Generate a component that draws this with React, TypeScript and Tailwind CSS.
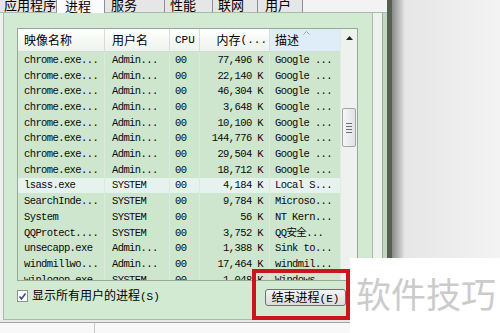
import React from "react";

type Row = { name: string; user: string; mem: string; desc: string; sel?: boolean };

const rows: Row[] = [
  { name: "chrome.exe...", user: "Admin...", mem: "77,496", desc: "Google ..." },
  { name: "chrome.exe...", user: "Admin...", mem: "22,140", desc: "Google ..." },
  { name: "chrome.exe...", user: "Admin...", mem: "46,304", desc: "Google ..." },
  { name: "chrome.exe...", user: "Admin...", mem: "3,648", desc: "Google ..." },
  { name: "chrome.exe...", user: "Admin...", mem: "10,100", desc: "Google ..." },
  { name: "chrome.exe...", user: "Admin...", mem: "144,776", desc: "Google ..." },
  { name: "chrome.exe...", user: "Admin...", mem: "29,504", desc: "Google ..." },
  { name: "chrome.exe...", user: "Admin...", mem: "18,712", desc: "Google ..." },
  { name: "lsass.exe", user: "SYSTEM", mem: "4,184", desc: "Local S...", sel: true },
  { name: "SearchInde...", user: "SYSTEM", mem: "9,784", desc: "Microso..." },
  { name: "System", user: "SYSTEM", mem: "56", desc: "NT Kern..." },
  { name: "QQProtect....", user: "SYSTEM", mem: "3,752", desc: "QQ安全..." },
  { name: "unsecapp.exe", user: "Admin...", mem: "1,388", desc: "Sink to..." },
  { name: "windmillwo...", user: "Admin...", mem: "17,464", desc: "windmil..." },
  { name: "winlogon.exe", user: "SYSTEM", mem: "1,048", desc: "Windows..." },
];

const tabs = [
  { label: "应用程序", w: "w-[57px]", pl: "pl-[4px]" },
  { label: "进程", w: "w-[48px]", pl: "pl-[8px]", sel: true },
  { label: "服务", w: "w-[60px]", pl: "pl-[6px]" },
  { label: "性能", w: "w-[48px]", pl: "pl-[5px]" },
  { label: "联网", w: "w-[45px]", pl: "pl-[5px]" },
  { label: "用户", w: "w-[45px]", pl: "pl-[7px]" },
];

const cjk = "font-['Noto_Sans_CJK_SC',sans-serif]";
const mono = "font-['Liberation_Mono','Noto_Sans_CJK_SC',monospace]";

function Tabs() {
  return (
    <div className="h-[13px] flex items-end overflow-hidden bg-[#f3f3f3]">
      {tabs.map((t) => (
        <div
          key={t.label}
          className={
            "h-[13px] flex items-end border-r border-[#8c8f96] " +
            t.w +
            " " +
            t.pl +
            (t.sel ? " bg-[#fbfbfb]" : " bg-[#e6e6e6] border-b border-b-[#a9bca9]")
          }
        >
          <span className={"text-[13px] leading-[13px] text-black pb-[1px] whitespace-nowrap " + cjk}>{t.label}</span>
        </div>
      ))}
      <div className="flex-1 h-[13px] border-b border-[#a9bca9]" />
    </div>
  );
}

function SortArrow() {
  return (
    <svg width="7" height="4" viewBox="0 0 7 4" className="absolute left-[33px] top-[2px]">
      <path d="M0.5 3.5 L3.5 0.5 L6.5 3.5" fill="none" stroke="#9aa3a9" strokeWidth="1" />
    </svg>
  );
}

function Header() {
  const cell = "h-full flex items-center border-r border-[#d6ddd6] text-[12px] text-black " + cjk;
  return (
    <div className="h-[23px] flex bg-linear-to-b from-[#ffffff] to-[#edf3ed] border-b border-[#d3dcd3]">
      <div className={cell + " w-[87px] pl-[6px]"}>映像名称</div>
      <div className={cell + " w-[65px] pl-[7px]"}>用户名</div>
      <div className={"h-full flex items-center border-r border-[#d6ddd6] w-[30px] pl-[5px] text-[11px] text-black " + mono}>CPU</div>
      <div className={cell + " w-[70px] justify-end pr-[2px] whitespace-nowrap overflow-hidden"}>
        内存<span className={"text-[11px] " + mono}>(...</span>
      </div>
      <div className={"h-full flex items-center w-[70px] pl-[5px] text-[12px] text-black relative bg-[#deedf7] " + cjk}>
        描述
        <SortArrow />
      </div>
    </div>
  );
}

function DataRow({ r }: { r: Row }) {
  const base = "h-full flex items-center pt-[2px] whitespace-nowrap overflow-hidden text-[10.5px] tracking-[-0.6px] text-[#0a0a0a] border-r border-[#dbebdb] " + mono;
  return (
    <div className={"h-[15.7px] flex " + (r.sel ? "bg-[#e5f2ee]" : "")}>
      <div className={base + " w-[87px] pl-[6px]"}>{r.name}</div>
      <div className={base + " w-[65px] pl-[7px]"}>{r.user}</div>
      <div className={base + " w-[30px] pl-[5px]"}>00</div>
      <div className={base + " w-[70px] justify-end pr-[6px]"}>{r.mem} K</div>
      <div className={base + " w-[70px] pl-[5px] border-r-0"}>{r.desc}</div>
    </div>
  );
}

function Scrollbar() {
  return (
    <div className="w-[17px] h-full flex flex-col bg-[#eef2ee] border-l border-[#e2e8e2]">
      <div className="h-[17px] flex items-center justify-center">
        <svg width="7" height="4" viewBox="0 0 7 4">
          <path d="M0 4 L3.5 0 L7 4 Z" fill="#222" />
        </svg>
      </div>
      <div className="h-[62px]" />
      <div className="h-[39px] mx-[1px] rounded-[2px] border border-[#9fa6a9] bg-linear-to-r from-[#f6f6f6] to-[#dfe3e6] flex flex-col items-center justify-center gap-[2px]">
        <div className="w-[6px] h-[1px] bg-[#6a7075]" />
        <div className="w-[6px] h-[1px] bg-[#6a7075]" />
        <div className="w-[6px] h-[1px] bg-[#6a7075]" />
        <div className="w-[6px] h-[1px] bg-[#6a7075]" />
      </div>
    </div>
  );
}

function ListView() {
  return (
    <div className="w-[341px] h-[253px] border border-[#97a897] flex bg-[#cde6cd] overflow-hidden">
      <div className="w-[322px] flex flex-col">
        <Header />
        <div className="flex-1 overflow-hidden">
          {rows.map((r, i) => (
            <DataRow key={i} r={r} />
          ))}
        </div>
      </div>
      <Scrollbar />
    </div>
  );
}

function Panel() {
  return (
    <div className="w-[370px] h-[307px] border border-[#a9bca9] border-t-0 bg-[#d2e9d2] flex flex-col pl-[13px] pt-[15px]">
      <ListView />
      <div className="flex items-start mt-[7px]">
        <div className="flex items-center gap-[4px]">
          <div className="w-[11px] h-[12px] bg-white border border-[#8e8f8f] flex items-center justify-center">
            <svg width="9" height="9" viewBox="0 0 9 9">
              <path d="M1.5 4.5 L3.5 7 L7.5 1.5" fill="none" stroke="#2c4f8f" strokeWidth="1.6" />
            </svg>
          </div>
          <span className={"text-[12px] leading-[13px] text-black " + cjk}>
            显示所有用户的进程<span className={"text-[11px] " + mono}>(S)</span>
          </span>
        </div>
        <div className="ml-auto mr-[26px] mt-[1px] w-[81px] h-[17px] rounded-[3px] border border-[#707070] bg-linear-to-b from-[#f4f4f4] to-[#dcdcdc] flex items-center justify-center">
          <span className={"text-[12px] leading-[13px] text-black whitespace-nowrap " + cjk}>
            结束进程<span className={"text-[11px] " + mono}>(E)</span>
          </span>
        </div>
      </div>
    </div>
  );
}

export default function App() {
  return (
    <div className="w-[500px] h-[333px] relative overflow-hidden flex bg-[#f0f0f0]">
      <div className="w-[387px] flex flex-col bg-[#f1f3f1]">
        <Tabs />
        <div className="flex h-[307px]">
          <div className="w-[3px] bg-[#eef1ee]" />
          <Panel />
          <div className="w-[9px] bg-[#eef2ee]" />
          <div className="w-[1px] bg-[#9aab9a]" />
          <div className="w-[4px] bg-[#c3d5c3]" />
        </div>
        <div className="h-[2px] bg-[#e8eae8]" />
        <div className="h-[11px] border-t border-[#a5a5a5] bg-[#f8f8f8] flex">
          <div className="w-[95px] border-r border-[#c8c8c8]" />
        </div>
      </div>
      <div className="w-[5px] bg-[#55604f]" />
      <div className="flex-1 bg-linear-to-r from-[#8a8a8a] from-0% via-[#e6e6e6] via-12% to-[#f3f3f3] to-100%" />

      <div className="absolute left-[252px] top-[269px] w-[98px] h-[51px] border-4 border-[#c8161d]" />
      <div className="absolute left-[350px] top-[258px] right-0 bottom-0 bg-white flex items-center justify-center pl-[2px] pb-[6px]">
        <span className={"text-[35px] leading-[40px] text-[#cbcbcb] whitespace-nowrap " + cjk}>软件技巧</span>
      </div>
    </div>
  );
}
